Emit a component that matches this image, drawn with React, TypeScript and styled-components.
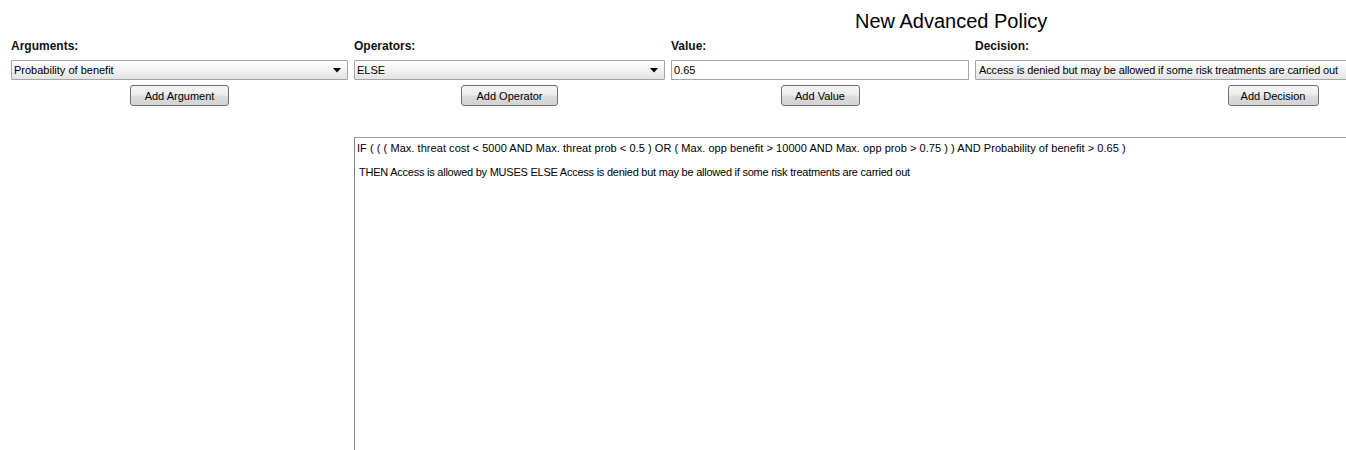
import React from 'react'
import styled, { createGlobalStyle } from 'styled-components'

const GlobalStyle = createGlobalStyle`
  html, body {
    margin: 0;
    padding: 0;
    background: #ffffff;
    overflow: hidden;
  }
  body {
    font-family: "Liberation Sans", Arial, sans-serif;
    font-size: 11px;
    color: #000000;
  }
`

const Page = styled.div`
  width: 100vw;
  height: 450px;
  overflow: hidden;
  padding: 10px 0 0 11px;
  box-sizing: border-box;
`

const Title = styled.h1`
  margin: 0 0 0 844px;
  height: 23px;
  font-family: "Liberation Sans", Arial, sans-serif;
  font-size: 20px;
  line-height: 23px;
  font-weight: normal;
  color: #000;
`

const Form = styled.div`
  display: grid;
  grid-template-columns: 337px 311px 298px 596px;
  column-gap: 6px;
  margin-top: 6px;
`

const Column = styled.div`
  display: flex;
  flex-direction: column;
  align-items: stretch;
`

const Label = styled.div`
  font-size: 12px;
  font-weight: bold;
  line-height: 14px;
  height: 14px;
  color: #111;
`

const SelectBox = styled.div<{ $pad?: number; $tight?: boolean }>`
  margin-top: 7px;
  height: 20px;
  box-sizing: border-box;
  border: 1px solid #a5a5a5;
  border-radius: 1px;
  background: linear-gradient(#ffffff 0%, #f4f4f4 45%, #e3e3e3 100%);
  display: flex;
  align-items: center;
  padding: 0 6px 0 ${(p) => p.$pad ?? 2}px;
  font-size: 11px;
  letter-spacing: ${(p) => (p.$tight ? '-0.12px' : '0')};
  white-space: nowrap;
  overflow: hidden;
`

const SelectText = styled.span`
  flex: 1;
  overflow: hidden;
`

const ValueInput = styled.input`
  margin-top: 7px;
  height: 20px;
  box-sizing: border-box;
  border: 1px solid #a5a5a5;
  padding: 0 2px;
  font-family: "Liberation Sans", Arial, sans-serif;
  font-size: 11px;
  color: #000;
  background: #fff;
  outline: none;
`

const ButtonRow = styled.div`
  display: flex;
  justify-content: center;
  margin-top: 5px;
`

const Button = styled.button<{ $w: number }>`
  width: ${(p) => p.$w}px;
  height: 21px;
  box-sizing: border-box;
  border: 1px solid #707070;
  border-radius: 3px;
  background: linear-gradient(#f6f6f6 0%, #ececec 48%, #dddddd 52%, #d3d3d3 100%);
  font-family: "Liberation Sans", Arial, sans-serif;
  font-size: 11px;
  color: #000;
  padding: 0;
  cursor: pointer;
`

const PolicyBox = styled.div`
  grid-column: 2 / span 3;
  margin-top: 31px;
  height: 320px;
  border-top: 1px solid #a0a0a0;
  border-left: 1px solid #7f858c;
  box-sizing: border-box;
  padding: 3px 0 0 2px;
  font-size: 11px;
`

const PolicyLine = styled.div<{ $indent?: number; $spacing: number }>`
  line-height: 14px;
  padding-left: ${(p) => p.$indent ?? 0}px;
  margin-bottom: 10px;
  white-space: nowrap;
  letter-spacing: ${(p) => p.$spacing}px;
`

const Arrow = () => (
  <svg width="8" height="5" viewBox="0 0 8 5">
    <path d="M0 0 H8 L4 4.5 Z" fill="#000" />
  </svg>
)

const columns = [
  { label: 'Arguments:', value: 'Probability of benefit', button: 'Add Argument', w: 99 },
  { label: 'Operators:', value: 'ELSE', button: 'Add Operator', w: 97 },
]

const App: React.FC = () => (
  <>
    <GlobalStyle />
    <Page>
      <Title>New Advanced Policy</Title>
      <Form>
        {columns.map((c) => (
          <Column key={c.label}>
            <Label>{c.label}</Label>
            <SelectBox>
              <SelectText>{c.value}</SelectText>
              <Arrow />
            </SelectBox>
            <ButtonRow>
              <Button $w={c.w}>{c.button}</Button>
            </ButtonRow>
          </Column>
        ))}
        <Column>
          <Label>Value:</Label>
          <ValueInput readOnly defaultValue="0.65" />
          <ButtonRow>
            <Button $w={79}>Add Value</Button>
          </ButtonRow>
        </Column>
        <Column>
          <Label>Decision:</Label>
          <SelectBox $pad={3} $tight>
            <SelectText>Access is denied but may be allowed if some risk treatments are carried out</SelectText>
            <Arrow />
          </SelectBox>
          <ButtonRow>
            <Button $w={91}>Add Decision</Button>
          </ButtonRow>
        </Column>
        <PolicyBox>
          <PolicyLine $spacing={0.05}>
            IF ( ( ( Max. threat cost &lt; 5000 AND Max. threat prob &lt; 0.5 ) OR ( Max. opp benefit &gt; 10000 AND
            Max. opp prob &gt; 0.75 ) ) AND Probability of benefit &gt; 0.65 )
          </PolicyLine>
          <PolicyLine $indent={2} $spacing={-0.24}>
            THEN Access is allowed by MUSES ELSE Access is denied but may be allowed if some risk treatments are carried
            out
          </PolicyLine>
        </PolicyBox>
      </Form>
    </Page>
  </>
)

export default App
